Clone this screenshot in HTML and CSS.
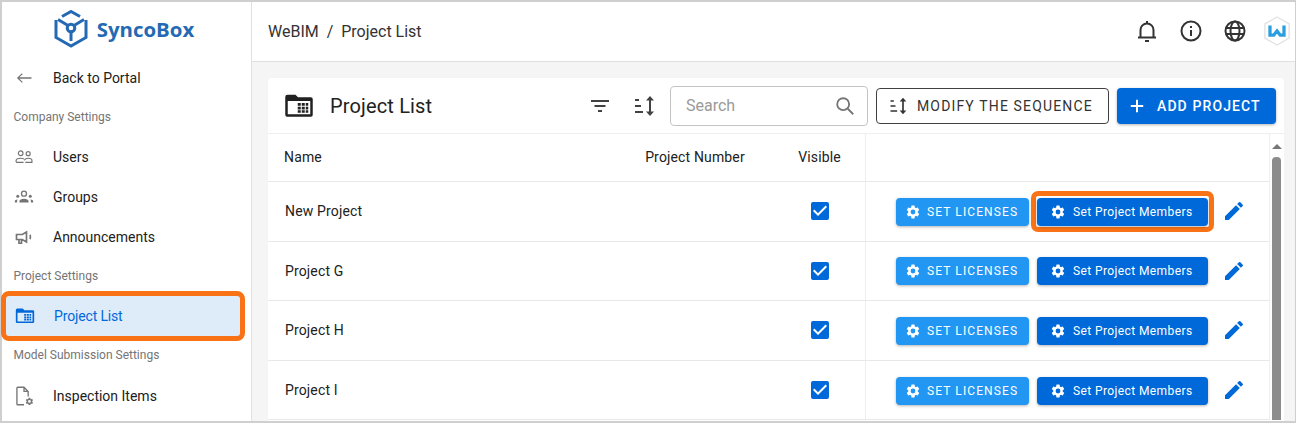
FILE: index.html
```html
<!DOCTYPE html>
<html lang="en">
<head>
<meta charset="UTF-8">
<title>Project List</title>
<link rel="stylesheet" href="styles.css">
</head>
<body>
<svg class="defs" width="0" height="0">
    <symbol id="i-gear" viewBox="0 0 24 24"><path d="M19.14 12.94c.04-.3.06-.61.06-.94 0-.32-.02-.64-.07-.94l2.03-1.58a.49.49 0 0 0 .12-.61l-1.92-3.32a.49.49 0 0 0-.59-.22l-2.39.96a7 7 0 0 0-1.62-.94l-.36-2.54a.48.48 0 0 0-.48-.41h-3.84a.47.47 0 0 0-.47.41l-.36 2.54c-.59.24-1.13.57-1.62.94l-2.39-.96a.49.49 0 0 0-.59.22L2.74 8.87a.48.48 0 0 0 .12.61l2.03 1.58c-.05.3-.09.63-.09.94s.02.64.07.94l-2.03 1.58a.49.49 0 0 0-.12.61l1.92 3.32c.12.22.37.29.59.22l2.39-.96c.5.38 1.03.7 1.62.94l.36 2.54c.05.24.24.41.48.41h3.84c.24 0 .44-.17.47-.41l.36-2.54c.59-.24 1.13-.56 1.62-.94l2.39.96c.22.08.47 0 .59-.22l1.92-3.32a.48.48 0 0 0-.12-.61zM12 15.6A3.6 3.6 0 1 1 12 8.4a3.6 3.6 0 0 1 0 7.2z"/></symbol>
    <symbol id="i-pen" viewBox="0 0 24 24"><path d="M3 17.25V21h3.75L17.81 9.94l-3.75-3.75L3 17.25zM20.71 7.04a1 1 0 0 0 0-1.41l-2.34-2.34a1 1 0 0 0-1.41 0l-1.83 1.83 3.75 3.75 1.83-1.83z"/></symbol>
    <symbol id="i-check" viewBox="0 0 24 24"><path d="M19 3H5a2 2 0 0 0-2 2v14a2 2 0 0 0 2 2h14a2 2 0 0 0 2-2V5a2 2 0 0 0-2-2zm-9 14-5-5 1.41-1.41L10 14.17l7.59-7.59L19 8l-9 9z"/></symbol>
    <symbol id="i-folder" viewBox="0 0 24 24"><path fill-rule="evenodd" d="M2.8 3h6.400l2 2H21.500a1.500 1.500 0 0 1 1.500 1.500v12.500a1.500 1.500 0 0 1-1.500 1.500H2.500A1.500 1.500 0 0 1 1 19V4.800A1.800 1.800 0 0 1 2.800 3zM3 8v10.500h18V8H3z"/><path d="M11 9.500h2.400v2.300H11zM14.200 9.500h2.400v2.300h-2.400zM17.400 9.500h2v2.300h-2zM11 12.500h2.400v2.300H11zM14.200 12.500h2.400v2.300h-2.400zM17.400 12.500h2v2.300h-2zM11 15.400h2.400v2H11zM14.200 15.400h2.400v2h-2.400zM17.400 15.400h2v2h-2z"/></symbol>
    <symbol id="i-sort" viewBox="0 0 24 24"><path d="M3 5h4v2H3V5zm0 6h6v2H3v-2zm0 6h8v2H3v-2zM18 2l4 4.500h-3v11h3L18 22l-4-4.500h3v-11h-3L18 2z"/></symbol>
</svg>

<div class="app">
    <aside class="sidebar">
        <div class="logo">
            <svg class="logo-mark" viewBox="0 0 34 38" fill="none" stroke="#2469b3" stroke-width="3">
                <path d="M8 6.500 17 1.500l9 5M32 10v17.500L17 36 2 27.500V10"/>
                <path d="M4 9.500l10 6M30 9.500l-10 6M17 22v9"/>
                <circle cx="17" cy="18" r="3.800"/>
            </svg>
            <span class="logo-text">SyncoBox</span>
        </div>
        <a class="nav-item back">
            <svg class="nav-icon" viewBox="0 0 24 24" fill="#757575"><path d="M21 11.200H6.500l4-4-1-1L3.500 12l6 5.800 1-1-4-4H21z"/></svg>
            Back to Portal
        </a>
        <div class="nav-title first">Company Settings</div>
        <a class="nav-item">
            <svg class="nav-icon" viewBox="0 0 24 24" fill="none" stroke="#757575" stroke-width="1.400"><circle cx="8" cy="7.500" r="2.800"/><circle cx="17" cy="8" r="2.400"/><path d="M2.500 18v-1.500c0-2 2.500-3 5.500-3 1.500 0 3 .3 4 1M2.500 18.500h9M13.500 18.500h8V16c0-1.500-2-2.500-4.500-2.500-2 0-4 .8-4.500 2.500"/></svg>
            Users
        </a>
        <a class="nav-item">
            <svg class="nav-icon" viewBox="0 0 24 24" fill="#757575"><circle cx="12" cy="8" r="3" fill="none" stroke="#757575" stroke-width="1.600"/><circle cx="4.500" cy="11" r="1.800"/><circle cx="19.500" cy="11" r="1.800"/><path d="M6.500 18.500v-1.500c0-2 2.500-3 5.500-3s5.500 1 5.500 3v1.500zM1 18.500v-1.200c0-1.300 1-2 3.500-2.200-.5.6-.8 1.300-.8 2.400v1zM23 18.500v-1.200c0-1.300-1-2-3.500-2.200.5.6.8 1.300.8 2.400v1z"/></svg>
            Groups
        </a>
        <a class="nav-item">
            <svg class="nav-icon" viewBox="0 0 24 24" fill="none" stroke="#757575" stroke-width="2"><path d="M3 9h7l5-3v12l-5-3H3zM6 15v4.500h3V15"/><path d="M19 9.500c.9 1 .9 4 0 5"/></svg>
            Announcements
        </a>
        <div class="nav-title">Project Settings</div>
        <a class="nav-item active">
            <svg class="nav-icon" fill="#0069d9"><use href="#i-folder"/></svg>
            Project List
        </a>
        <div class="nav-title model">Model Submission Settings</div>
        <a class="nav-item inspect">
            <svg class="nav-icon" viewBox="0 0 24 24" fill="none" stroke="#757575" stroke-width="1.600"><path d="M12 22.500H4.500a1 1 0 0 1-1-1V2.500a1 1 0 0 1 1-1H12l5 5v6M12 1.500v5h5"/><use href="#i-gear" x="13" y="13" width="11" height="11" fill="#757575" stroke="none"/></svg>
            Inspection Items
        </a>
    </aside>

    <div class="content">
        <header class="topbar">
            <div class="crumbs">WeBIM &nbsp;/&nbsp; Project List</div>
            <div class="top-icons">
                <svg class="top-icon" viewBox="0 0 24 24" fill="none" stroke="#333" stroke-width="2"><path d="M3 18.500h18M5.500 18.500V11a6.500 6.500 0 0 1 13 0v7.500M12 2v2.500M10 22h4"/></svg>
                <svg class="top-icon" viewBox="0 0 24 24" fill="none" stroke="#333" stroke-width="2"><circle cx="12" cy="12" r="9.500"/><path d="M12 11v6M12 7v2"/></svg>
                <svg class="top-icon" viewBox="0 0 24 24" fill="none" stroke="#333" stroke-width="2"><circle cx="12" cy="12" r="9.500"/><ellipse cx="12" cy="12" rx="4.500" ry="9.500"/><path d="M3 9h18M3 15h18"/></svg>
                <svg class="avatar" viewBox="0 0 30 32">
                    <path d="M15 1 28 8.500v15L15 31 2 23.500v-15z" fill="#fff" stroke="#e3e3e3" stroke-width="1.500"/>
                    <path d="M7.500 10v10.500h4L15 16l3.500 4.500h4V10" fill="none" stroke="#2a9fe0" stroke-width="3.500"/>
                </svg>
            </div>
        </header>

        <main class="main">
            <section class="card">
                <div class="card-head">
                    <svg class="head-icon" fill="#212121"><use href="#i-folder"/></svg>
                    <h1>Project List</h1>
                    <svg class="tool-icon filter" viewBox="0 0 24 24" fill="#424242"><path d="M3 6h18v2H3zM6.500 11h11v2h-11zM10 16h4v2h-4z"/></svg>
                    <svg class="tool-icon sort" fill="#424242"><use href="#i-sort"/></svg>
                    <div class="search">
                        <span>Search</span>
                        <svg viewBox="0 0 24 24" fill="none" stroke="#757575" stroke-width="2"><circle cx="10" cy="10" r="6.500"/><path d="M15 15l6 6"/></svg>
                    </div>
                    <button class="btn-outline"><svg fill="#333"><use href="#i-sort"/></svg>MODIFY THE SEQUENCE</button>
                    <button class="btn-add"><svg viewBox="0 0 24 24" fill="#fff"><path d="M10.800 4.500h2.400v6.300h6.300v2.400h-6.300v6.300h-2.400v-6.300H4.500v-2.400h6.300z"/></svg>ADD PROJECT</button>
                </div>
                <div class="table-wrap">
                    <div class="table">
                        <div class="row row-head">
                            <div class="c-name">Name</div>
                            <div class="c-num">Project Number</div>
                            <div class="c-vis">Visible</div>
                            <div class="c-act"></div>
                        </div>
                        <div class="row">
                            <div class="c-name">New Project</div>
                            <div class="c-num"></div>
                            <div class="c-vis"><svg class="check"><use href="#i-check"/></svg></div>
                            <div class="c-act">
                                <button class="btn-lic"><svg><use href="#i-gear"/></svg>SET LICENSES</button>
                                <span class="mark"><button class="btn-mem"><svg><use href="#i-gear"/></svg>Set Project Members</button></span>
                                <svg class="pen"><use href="#i-pen"/></svg>
                            </div>
                        </div>
                        <div class="row">
                            <div class="c-name">Project G</div>
                            <div class="c-num"></div>
                            <div class="c-vis"><svg class="check"><use href="#i-check"/></svg></div>
                            <div class="c-act">
                                <button class="btn-lic"><svg><use href="#i-gear"/></svg>SET LICENSES</button>
                                <span class="mark off"><button class="btn-mem"><svg><use href="#i-gear"/></svg>Set Project Members</button></span>
                                <svg class="pen"><use href="#i-pen"/></svg>
                            </div>
                        </div>
                        <div class="row">
                            <div class="c-name">Project H</div>
                            <div class="c-num"></div>
                            <div class="c-vis"><svg class="check"><use href="#i-check"/></svg></div>
                            <div class="c-act">
                                <button class="btn-lic"><svg><use href="#i-gear"/></svg>SET LICENSES</button>
                                <span class="mark off"><button class="btn-mem"><svg><use href="#i-gear"/></svg>Set Project Members</button></span>
                                <svg class="pen"><use href="#i-pen"/></svg>
                            </div>
                        </div>
                        <div class="row">
                            <div class="c-name">Project I</div>
                            <div class="c-num"></div>
                            <div class="c-vis"><svg class="check"><use href="#i-check"/></svg></div>
                            <div class="c-act">
                                <button class="btn-lic"><svg><use href="#i-gear"/></svg>SET LICENSES</button>
                                <span class="mark off"><button class="btn-mem"><svg><use href="#i-gear"/></svg>Set Project Members</button></span>
                                <svg class="pen"><use href="#i-pen"/></svg>
                            </div>
                        </div>
                    </div>
                    <div class="scrollbar"><span class="arrow"></span><span class="thumb"></span></div>
                </div>
            </section>
        </main>
    </div>
</div>
</body>
</html>
```

FILE: styles.css
```css
* {
    box-sizing: border-box;
}
html, body {
    margin: 0;
    height: 100%;
    overflow: hidden;
}
body {
    font-family: Roboto, "Liberation Sans", sans-serif;
    color: #212121;
    background: #fff;
}
.defs {
    position: absolute;
}
.app {
    display: flex;
    height: 423px;
    border: 2px solid #cfcfcf;
    border-right-width: 1px;
}
.sidebar {
    width: 250px;
    flex: none;
    border-right: 1px solid #e0e0e0;
    background: #fff;
}
.logo {
    height: 53px;
    display: flex;
    align-items: center;
    justify-content: center;
    gap: 9px;
    padding-right: 5px;
}
.logo-mark {
    width: 34px;
    height: 38px;
}
.logo-text {
    font-family: "Open Sans", sans-serif;
    font-weight: 700;
    font-size: 20.4px;
    color: #2469b3;
}
.nav-item {
    display: flex;
    align-items: center;
    height: 40px;
    padding-left: 12px;
    font-size: 14px;
    color: #212121;
}
.nav-icon {
    width: 20px;
    height: 20px;
    margin-right: 19px;
    flex: none;
}
.back {
    margin-top: 3px;
}
.nav-title {
    height: 39px;
    padding: 12px 0 0 11.5px;
    font-size: 12px;
    color: #757575;
}
.nav-title.model {
    height: 30px;
    padding-top: 7px;
}
.nav-item.active {
    height: 50px;
    margin: -5px 6px 0 -1px;
    padding-left: 9px;
    color: #0069d9;
    letter-spacing: -0.15px;
    background: #deebf9;
    border: 5px solid #f97316;
    border-radius: 8px;
}
.nav-item.inspect {
    margin-top: 5px;
}

.content {
    flex: 1;
    min-width: 0;
    display: flex;
    flex-direction: column;
    background: #f5f5f5;
}
.topbar {
    height: 60px;
    flex: none;
    background: #fff;
    border-bottom: 1px solid #e0e0e0;
    display: flex;
    align-items: center;
    justify-content: space-between;
    padding: 0 4px 1px 16px;
}
.crumbs {
    font-size: 16px;
    color: #333;
}
.top-icons {
    display: flex;
    align-items: center;
    gap: 20px;
}
.top-icon {
    width: 24px;
    height: 24px;
}
.avatar {
    width: 28px;
    height: 30px;
    margin-left: -4px;
}
.main {
    padding: 16px 11px 0 16px;
    flex: 1;
    min-height: 0;
}
.card {
    background: #fff;
    border-radius: 4px 4px 0 0;
    height: 100%;
    overflow: hidden;
}
.card-head {
    height: 56px;
    display: flex;
    align-items: center;
    padding: 0 8px 0 16px;
    border-bottom: 1px solid #eee;
}
.head-icon {
    width: 30px;
    height: 30px;
    margin-right: 16px;
}
h1 {
    margin: 0;
    font-size: 20px;
    font-weight: 400;
    letter-spacing: 0.15px;
    flex: 1;
}
.tool-icon {
    width: 24px;
    height: 24px;
}
.filter {
    margin-right: 20px;
}
.sort {
    margin-right: 14px;
}
.search {
    width: 198px;
    height: 40px;
    border: 1px solid #c4c4c4;
    border-radius: 4px;
    display: flex;
    align-items: center;
    justify-content: space-between;
    padding: 0 11px 0 15px;
    font-size: 16px;
    color: #9a9a9a;
    margin-right: 8px;
}
.search svg {
    width: 22px;
    height: 22px;
}
button {
    font-family: inherit;
    border: 0;
    display: inline-flex;
    align-items: center;
    cursor: pointer;
}
.btn-outline {
    width: 233px;
    height: 36px;
    background: #fff;
    border: 1px solid #424242;
    border-radius: 4px;
    font-size: 14px;
    letter-spacing: 1.15px;
    color: #333;
    padding: 0 0 0 11px;
    margin-right: 8px;
}
.btn-outline svg {
    width: 20px;
    height: 20px;
    margin-right: 9px;
}
.btn-add {
    width: 159px;
    height: 36px;
    background: #0069d9;
    color: #fff;
    border-radius: 4px;
    font-size: 14px;
    font-weight: 500;
    letter-spacing: 1.1px;
    padding: 0 0 0 10px;
    box-shadow: 0 1px 3px rgba(0, 0, 0, 0.3);
}
.btn-add svg {
    width: 20px;
    height: 20px;
    margin-right: 10px;
}
.table-wrap {
    display: flex;
}
.table {
    flex: 1;
    min-width: 0;
}
.row {
    display: grid;
    grid-template-columns: 362px 130px 106px 1fr;
    height: 59.6px;
    border-bottom: 1px solid #e8e8e8;
    font-size: 14px;
    letter-spacing: 0.15px;
    align-items: stretch;
}
.row-head {
    height: 48px;
}
.row > div {
    display: flex;
    align-items: center;
}
.row-head > div {
    padding-bottom: 1px;
}
.c-name {
    padding-left: 17px;
}
.row-head .c-name {
    padding-left: 16px;
}
.c-num {
    justify-content: center;
}
.c-vis {
    justify-content: center;
    padding-left: 14px;
    border-right: 1px solid #eee;
}
.c-act {
    padding-left: 30px;
}
.check {
    width: 24px;
    height: 24px;
    fill: #0069d9;
}
.btn-lic, .btn-mem {
    height: 28px;
    border-radius: 4px;
    color: #fff;
    font-size: 12px;
    box-shadow: 0 1px 3px rgba(0, 0, 0, 0.3);
}
.btn-lic svg, .btn-mem svg {
    width: 16px;
    height: 16px;
    fill: #fff;
}
.btn-lic {
    width: 133px;
    background: #2196f3;
    letter-spacing: 1.1px;
    padding-left: 9px;
    margin-top: 1px;
}
.btn-lic svg {
    margin-right: 6px;
}
.btn-mem {
    width: 171px;
    background: #0069d9;
    padding-left: 13px;
    letter-spacing: 0.4px;
}
.btn-mem svg {
    margin-right: 7px;
}
.mark {
    display: inline-flex;
    margin-left: 2px;
    padding: 2px 1px 1px;
    border: 5px solid #f97316;
    border-radius: 7px;
    background: #fff;
}
.mark.off {
    border-color: transparent;
    background: none;
}
.pen {
    width: 24px;
    height: 24px;
    fill: #0069d9;
    margin-left: 8px;
}
.scrollbar {
    width: 15px;
    flex: none;
    background: #fff;
    position: relative;
    border-left: 1px solid #eee;
}
.arrow {
    position: absolute;
    top: 10px;
    left: 2px;
    border: 5px solid transparent;
    border-top: 0;
    border-bottom: 5px solid #777;
}
.thumb {
    position: absolute;
    top: 23px;
    bottom: 0;
    left: 2px;
    width: 9px;
    background: #8c8c8c;
    border-radius: 4px 4px 0 0;
}
```
